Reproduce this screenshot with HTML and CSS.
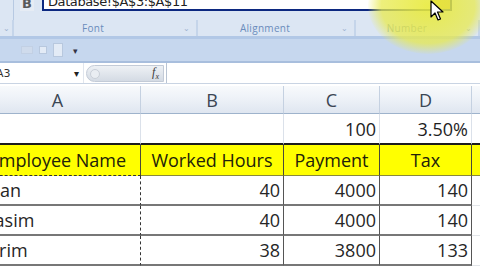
FILE: index.html
```html
<!DOCTYPE html>
<html>
<head>
<meta charset="utf-8">
<link rel="stylesheet" href="styles.css">
</head>
<body>
<div class="app">
  <div class="ribbon">
    <div class="ribbon-top">
      <div class="edge-piece"></div>
      <div class="bold-btn">B</div>
      <div class="refers">
        <span class="refers-text">Database!$A$3:$A$11</span>
        <span class="collapse-btn"></span>
      </div>
    </div>
    <div class="ribbon-labels">
      <div class="grp grp-left"><span class="launcher">⌄</span></div>
      <div class="grp grp-font"><span class="lbl">Font</span><span class="launcher">⌄</span></div>
      <div class="grp grp-align"><span class="lbl">Alignment</span><span class="launcher">⌄</span></div>
      <div class="grp grp-num"><span class="lbl">Number</span><span class="launcher">⌄</span></div>
    </div>
  </div>
  <div class="qat">
    <span class="qicon q1"></span>
    <span class="qicon q2"></span>
    <span class="qicon q3"></span>
    <span class="qarrow">▾</span>
  </div>
  <div class="fbar">
    <div class="namebox"><span>A3</span><span class="nb-arrow">▾</span></div>
    <div class="fx-cap"><span class="fx-dot"></span><span class="fx">f<sub>x</sub></span></div>
    <div class="finput"></div>
  </div>
  <div class="sheet">
    <div class="c hd">A</div><div class="c hd">B</div><div class="c hd">C</div><div class="c hd">D</div><div class="c hd"></div>
    <div class="c r1"></div><div class="c r1"></div><div class="c r1 num">100</div><div class="c r1 num">3.50%</div><div class="c r1"></div>
    <div class="c r2 a">Employee Name</div><div class="c r2">Worked Hours</div><div class="c r2">Payment</div><div class="c r2">Tax</div><div class="c r2 e"></div>
    <div class="c rd a name">Khan</div><div class="c rd num">40</div><div class="c rd num">4000</div><div class="c rd num">140</div><div class="c rd e"></div>
    <div class="c rd a name">Wasim</div><div class="c rd num">40</div><div class="c rd num">4000</div><div class="c rd num">140</div><div class="c rd e"></div>
    <div class="c rd a name">Karim</div><div class="c rd num">38</div><div class="c rd num">3800</div><div class="c rd num">133</div><div class="c rd e"></div>
  </div>
  <div class="glow"></div>
  <svg class="cursor" width="14" height="22" viewBox="0 0 14 22">
    <path d="M1 1 L1 17 L5 13 L8 20 L10.5 19 L7.5 12 L13 12 Z" fill="#fff" stroke="#000" stroke-width="1.2" stroke-linejoin="round"/>
  </svg>
</div>
</body>
</html>
```
FILE: styles.css
```css
* { box-sizing: border-box; }
html, body { margin: 0; padding: 0; }
body { width: 480px; height: 270px; overflow: hidden; background: #fff; }
.app {
  position: relative;
  width: 480px; height: 270px; overflow: hidden;
  font-family: "Open Sans", "Liberation Sans", sans-serif;
}
.ribbon { height: 36px; background: #dce6f3; display: flex; flex-direction: column; }
.ribbon-top { height: 20px; display: flex; align-items: flex-start; }
.edge-piece { width: 14px; height: 20px; border-right: 1px solid #b7c9e2; }
.bold-btn {
  width: 14px; height: 11px; margin-left: 6px;
  font: bold 13px "DejaVu Sans", sans-serif; color: #5a5a5a;
  line-height: 8px; overflow: hidden; text-align: center;
  background: #e6ecf4;
}
.refers {
  margin-left: 8px; width: 410px; height: 11px;
  background: #fff; border: 2px solid #0c2880; border-top: none;
  display: flex; justify-content: space-between; align-items: flex-end;
  overflow: hidden;
}
.refers-text {
  font: 13px "DejaVu Sans", sans-serif; color: #222;
  line-height: 13px; margin-left: 4px; margin-bottom: 1px; letter-spacing: -0.4px;
}
.collapse-btn {
  width: 18px; height: 11px; background: #d9b43a; border-left: 1px solid #6b5a1a;
}
.ribbon-labels { height: 16px; display: flex; color: #6a8cbc; font-size: 10px; }
.grp {
  display: flex; align-items: center; justify-content: center; position: relative;
  border-right: 2px solid #c5d5ea; height: 16px;
}
.grp-left { width: 14px; }
.grp-font { width: 184px; padding-right: 24px; }
.grp-align { width: 158px; padding-right: 22px; }
.grp-num { width: 124px; padding-right: 20px; }
.lbl { letter-spacing: 0.3px; }
.launcher { position: absolute; right: 6px; top: 2px; font-size: 8px; color: #9fb3cf; }
.grp-left .launcher { right: 2px; }
.qat {
  height: 27px; background: #c6d7ee;
  border-top: 3px solid #b2c8e6; border-bottom: 2px solid #a8bedd;
  display: flex; align-items: center; padding-left: 21px; gap: 6px;
}
.qicon { display: block; background: #e3ebf6; border: 1px solid #b8c8de; }
.q1 { width: 12px; height: 8px; background: #cfdbec; border-color: #c2d0e4; }
.q2 { width: 8px; height: 8px; }
.q3 { width: 10px; height: 14px; }
.qarrow { font-size: 9px; color: #334; margin-left: 4px; }
.fbar {
  height: 21px; background: #fff; display: flex; align-items: stretch;
  border-bottom: 1px solid #c9d4e3;
}
.namebox {
  width: 88px; display: flex; justify-content: space-between; align-items: center;
  font: 11px "DejaVu Sans", sans-serif; color: #333; padding-right: 4px;
  margin-left: -4px; border-right: 1px solid #e1e6ee;
}
.nb-arrow { font-size: 10px; color: #222; }
.fx-cap {
  width: 78px; margin: 2px 0 1px 2px;
  border-radius: 10px 0 0 10px;
  background: linear-gradient(#eef1f5, #d4dbe4);
  border: 1px solid #c3cbd7;
  display: flex; align-items: center; justify-content: space-between; padding: 0 4px 0 3px;
}
.fx-dot { width: 10px; height: 10px; border-radius: 50%; border: 1px solid #c9cfd8; background: #e9edf2; }
.fx { font: italic 12px "Liberation Serif", serif; color: #3a3a3a; }
.fx sub { font-size: 8px; }
.finput { flex: 1; border-left: 1px solid #b9c4d3; margin-left: 2px; }
.sheet {
  margin-top: 2px;
  margin-left: -25px;
  display: grid;
  grid-template-columns: 166px 143px 96px 92px 30px;
  grid-template-rows: 28px 31px 31px 30px 30px 30px;
  font-size: 18px; color: #1e1e1e;
}
.c { display: flex; align-items: center; justify-content: center; white-space: nowrap; overflow: hidden; }
.hd {
  background: linear-gradient(#f8fafc 0%, #eef2f8 45%, #dfe6f0 100%);
  border-right: 1px solid #c5d1e1; border-bottom: 1px solid #9eb3cc;
  color: #3b4654; font-size: 18px;
}
.r1 { border-right: 1px solid #dbe1ea; border-bottom: 2px solid #1c1c1c; }
.num { justify-content: flex-end; padding-right: 3px; }
.r2 {
  background: #ffff00; border-right: 1px solid #4a4a3a; border-bottom: 1px solid #8a8a3a;
  color: #22220a;
}
.r2.a { border-bottom: 1px dashed #333; }
.rd { border-right: 1px solid #555; border-bottom: 2px solid #777; color: #262626; }
.rd.a { border-right: 1px dashed #333; }
.name { justify-content: flex-start; padding-left: 3px; }
.e { border-right: none; }
.rd.e { border-bottom: 1px solid #e3e6ea; }
.glow {
  position: absolute; left: 368px; top: -42px; width: 120px; height: 96px; border-radius: 50%;
  background: radial-gradient(ellipse at center, rgba(232,234,60,0.9) 0%, rgba(232,234,80,0.75) 55%, rgba(232,234,80,0) 72%);
  pointer-events: none;
}
.cursor { position: absolute; left: 430px; top: 0px; }
```
